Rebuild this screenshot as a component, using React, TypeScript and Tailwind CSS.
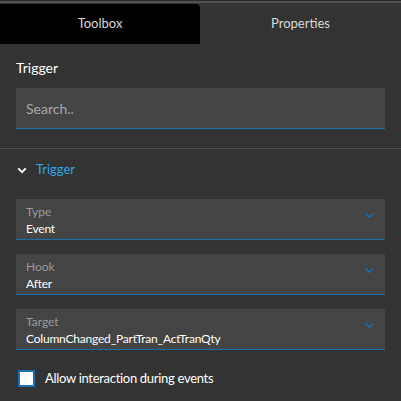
import React from 'react';

function Chevron({ className, width = 1.6 }: { className: string; width?: number }) {
  return (
    <svg viewBox="0 0 12 8" className={className} fill="none" stroke="currentColor" strokeWidth={width}>
      <path d="M1.5 1.5 6 6l4.5-4.5" />
    </svg>
  );
}

function SelectField({ label, value }: { label: string; value: string }) {
  return (
    <div className="mx-4 h-[41px] bg-[#444444] border-b border-[#1a71b0] flex items-center pl-[10px] pr-[10px]">
      <div className="flex-1 flex flex-col leading-none pt-[2px]">
        <span className="text-[12px] text-[#9a9a9a]">{label}</span>
        <span className="text-[12px] text-white mt-[5px] tracking-[-0.2px]">{value}</span>
      </div>
      <Chevron className="w-[11px] h-[7px] text-[#1a71b0] -mt-[8px]" />
    </div>
  );
}

export default function App() {
  return (
    <div className="w-[401px] h-[401px] bg-[#333333] overflow-hidden text-white" style={{ fontFamily: 'Lato, "Open Sans", sans-serif' }}>
      <div className="h-[1px] bg-[#2a2a2a]" />
      <div className="h-[2px] bg-[#505050]" />
      <div className="flex h-[40px] mt-[1px] text-[13px]">
        <div className="w-[200px] bg-black rounded-tr-[4px] flex items-center justify-center text-[#d8d8d8]">Toolbox</div>
        <div className="flex-1 flex items-center justify-center text-[#d8d8d8]">Properties</div>
      </div>
      <div className="px-4 pt-[17px] text-[14px] leading-none">Trigger</div>
      <div className="mx-4 mt-[13px] h-[41px] bg-[#444444] border-b border-[#1a71b0] flex items-center pl-[10px] text-[14px] text-[#a8a8a8]">
        Search..
      </div>
      <div className="mt-[19px] h-[1px] bg-[#4f4f4f]" />
      <div className="flex items-center pl-[17px] h-[40px] mt-[1px]">
        <Chevron className="w-[10px] h-[7px] text-white" width={2.4} />
        <span className="ml-[9px] text-[13px] text-[#2aa8e6]">Trigger</span>
      </div>
      <div className="mt-[9px] flex flex-col gap-[14px]">
        <SelectField label="Type" value="Event" />
        <SelectField label="Hook" value="After" />
        <SelectField label="Target" value="ColumnChanged_PartTran_ActTranQty" />
      </div>
      <div className="flex items-center pl-[18px] mt-[19px]">
        <div className="w-[17px] h-[17px] border-2 border-[#1a71b0] bg-white" />
        <span className="ml-[10px] text-[13px] text-white tracking-[-0.3px]">Allow interaction during events</span>
      </div>
    </div>
  );
}
